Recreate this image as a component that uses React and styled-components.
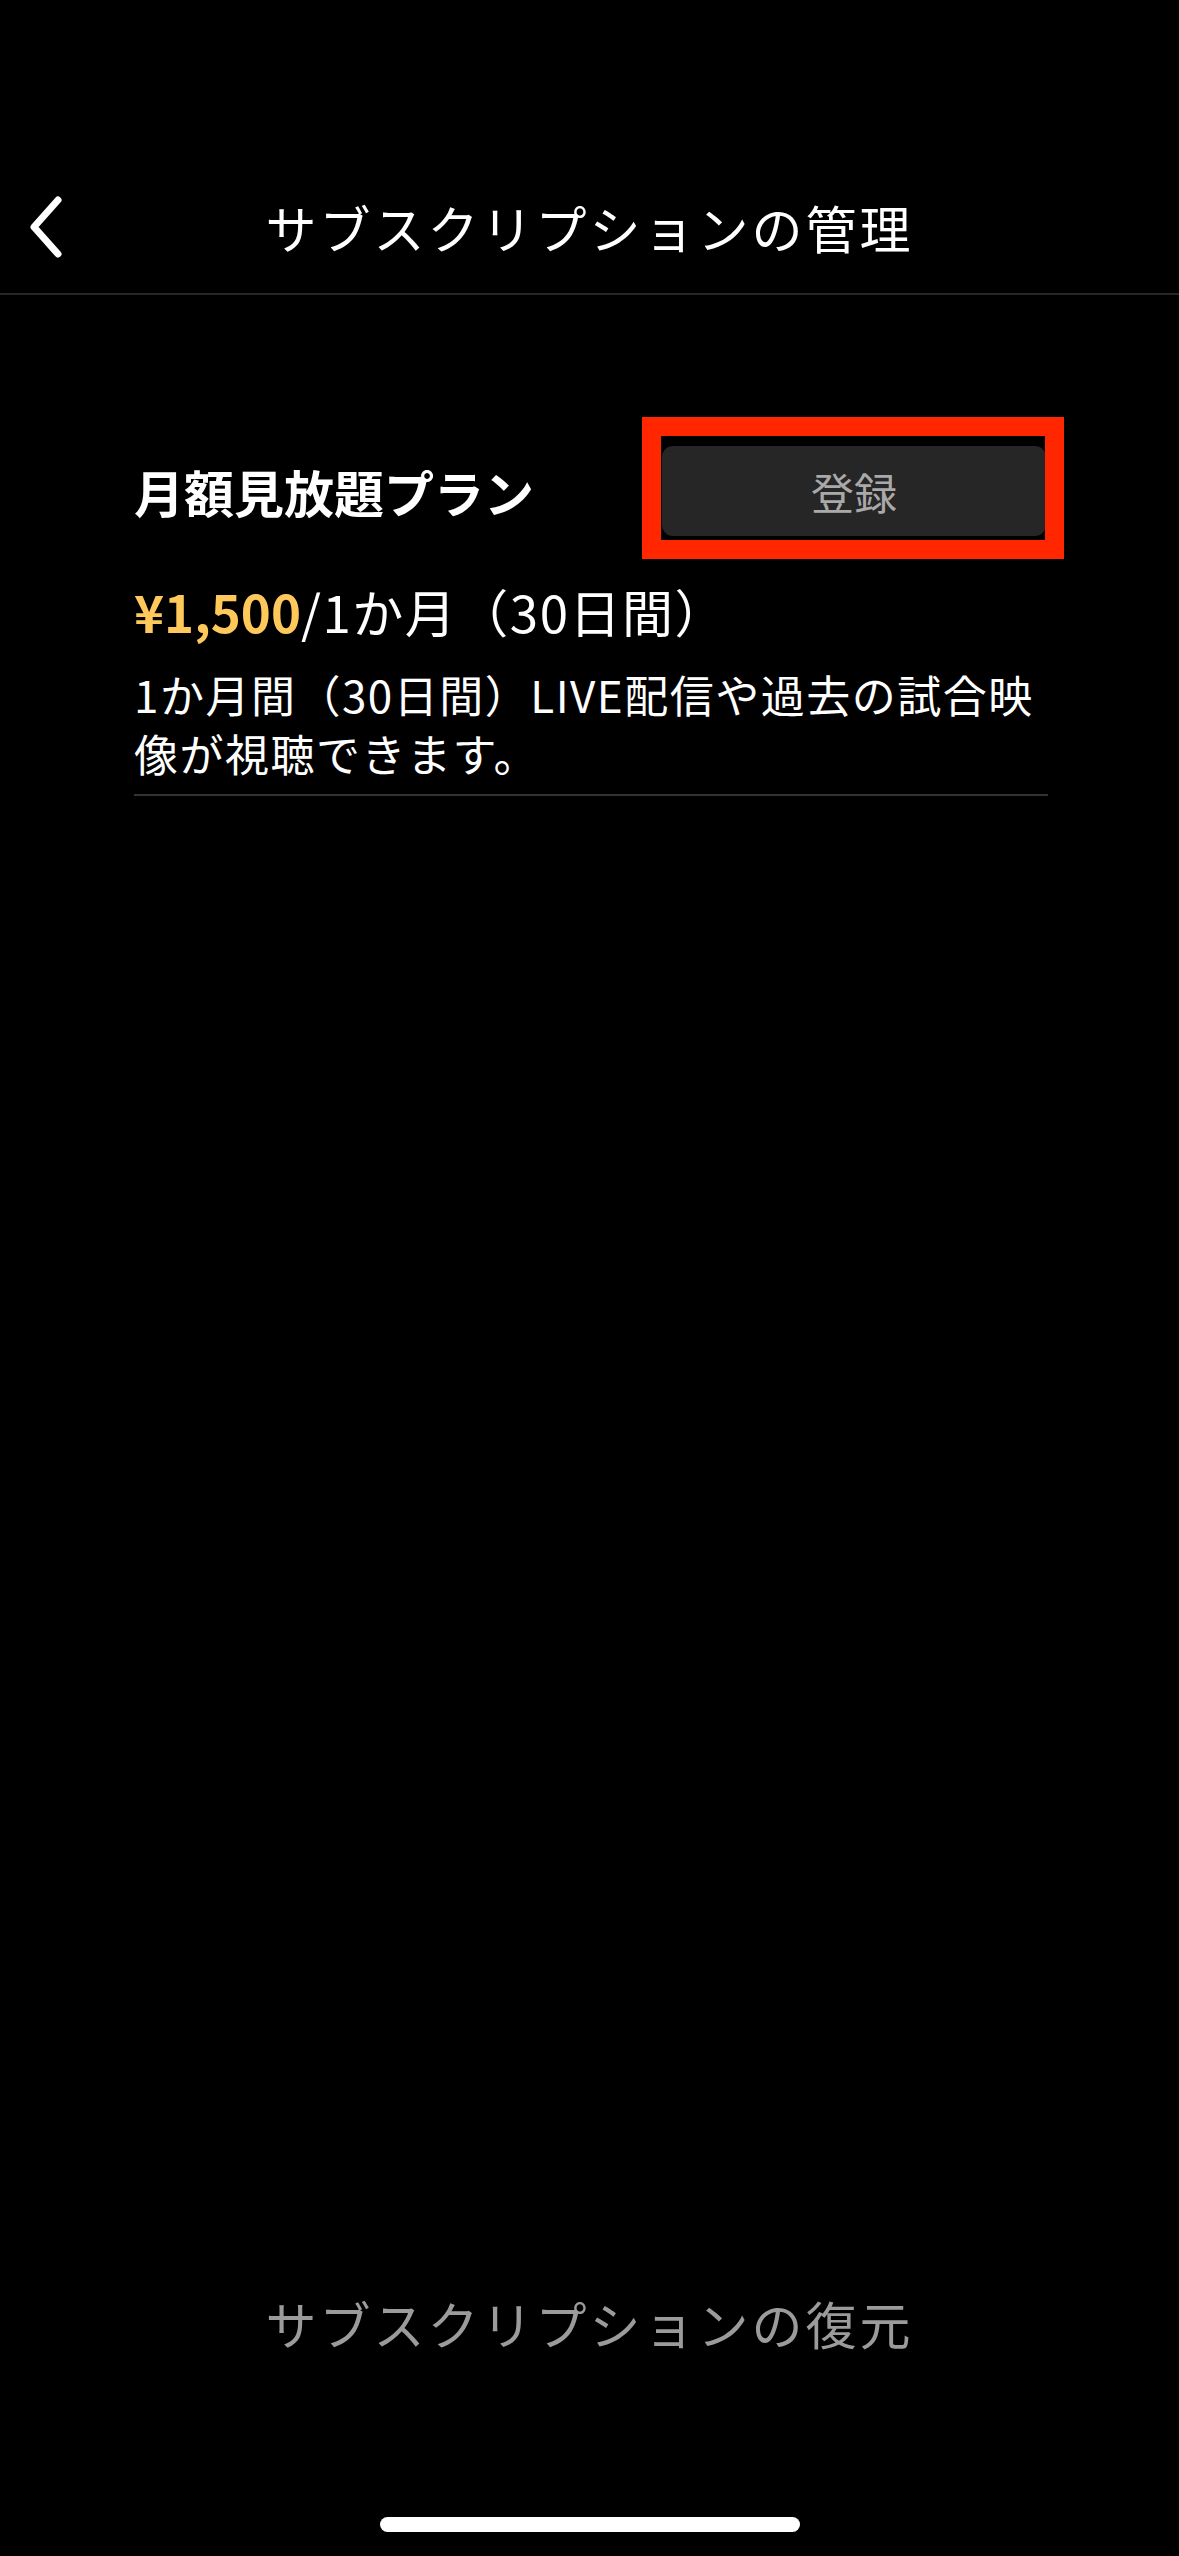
import React from "react";
import styled, { createGlobalStyle } from "styled-components";

const GlobalStyle = createGlobalStyle`
	html, body {
		margin: 0;
		padding: 0;
		background: #000;
	}
	body {
		font-family: "Noto Sans CJK JP", "Noto Sans", sans-serif;
		color: #fff;
	}
`;

const Screen = styled.div`
	width: 1179px;
	min-height: 2556px;
	background: #000;
	display: flex;
	flex-direction: column;
`;

const StatusSpacer = styled.div`
	height: 161px;
`;

const NavBar = styled.header`
	height: 132px;
	display: grid;
	grid-template-columns: 120px 1fr 120px;
	align-items: center;
	border-bottom: 2px solid #262626;
`;

const BackButton = styled.button`
	background: none;
	border: none;
	padding: 0 0 0 25px;
	display: flex;
	align-items: center;
	cursor: pointer;
`;

const NavTitle = styled.h1`
	margin: 0;
	text-align: center;
	font-size: 51px;
	font-weight: 400;
	letter-spacing: 3px;
	line-height: 1;
	color: #fff;
`;

const Content = styled.main`
	padding: 151px 131px 0 134px;
`;

const PlanRow = styled.div`
	display: flex;
	align-items: center;
	justify-content: space-between;
`;

const PlanName = styled.h2`
	margin: 0;
	font-size: 50px;
	font-weight: 700;
	line-height: 1;
`;

const Highlight = styled.div`
	position: relative;
`;

const RegisterButton = styled.button`
	width: 384px;
	height: 90px;
	background: #262626;
	border: none;
	border-radius: 11px;
	color: #a9a9a9;
	font-family: inherit;
	font-size: 43px;
	font-weight: 400;
	margin-right: 2px;
`;

const RedFrame = styled.span`
	position: absolute;
	left: -20px;
	top: -29px;
	right: -16px;
	bottom: -23px;
	border: 19px solid #ff2600;
	pointer-events: none;
`;

const Price = styled.p`
	margin: 40px 0 0;
	font-size: 51px;
	line-height: 70px;
	font-weight: 400;
	letter-spacing: 1.5px;
`;

const Amount = styled.span`
	color: #ffc85a;
	font-weight: 700;
	letter-spacing: 0;
`;

const Description = styled.p`
	margin: 19px 0 0;
	font-size: 44px;
	line-height: 59px;
	letter-spacing: 1.5px;
	padding-bottom: 11px;
	border-bottom: 2px solid #333;
`;

const Footer = styled.footer`
	margin-top: auto;
	display: flex;
	flex-direction: column;
	align-items: center;
	padding-bottom: 24px;
`;

const RestoreButton = styled.button`
	background: none;
	border: none;
	padding: 0;
	color: #9b9b9b;
	font-family: inherit;
	font-size: 51px;
	line-height: 70px;
	font-weight: 400;
	letter-spacing: 3px;
	cursor: pointer;
`;

const HomeIndicator = styled.div`
	margin-top: 159px;
	width: 420px;
	height: 15px;
	border-radius: 8px;
	background: #fff;
`;

const ChevronLeft = () => (
	<svg width="44" height="62" viewBox="0 0 44 62">
		<path
			d="M33 4 L9 31 L33 58"
			fill="none"
			stroke="#fff"
			strokeWidth="7"
			strokeLinecap="round"
			strokeLinejoin="round"
		/>
	</svg>
);

const App = () => {
	return (
		<>
			<GlobalStyle />
			<Screen>
				<StatusSpacer />
				<NavBar>
					<BackButton aria-label="戻る">
						<ChevronLeft />
					</BackButton>
					<NavTitle>サブスクリプションの管理</NavTitle>
					<div />
				</NavBar>

				<Content>
					<PlanRow>
						<PlanName>月額見放題プラン</PlanName>
						<Highlight>
							<RegisterButton>登録</RegisterButton>
							<RedFrame />
						</Highlight>
					</PlanRow>
					<Price>
						<Amount>¥1,500</Amount>/1か月（30日間）
					</Price>
					<Description>
						1か月間（30日間）LIVE配信や過去の試合映像が視聴できます。
					</Description>
				</Content>

				<Footer>
					<RestoreButton>サブスクリプションの復元</RestoreButton>
					<HomeIndicator />
				</Footer>
			</Screen>
		</>
	);
};

export default App;
